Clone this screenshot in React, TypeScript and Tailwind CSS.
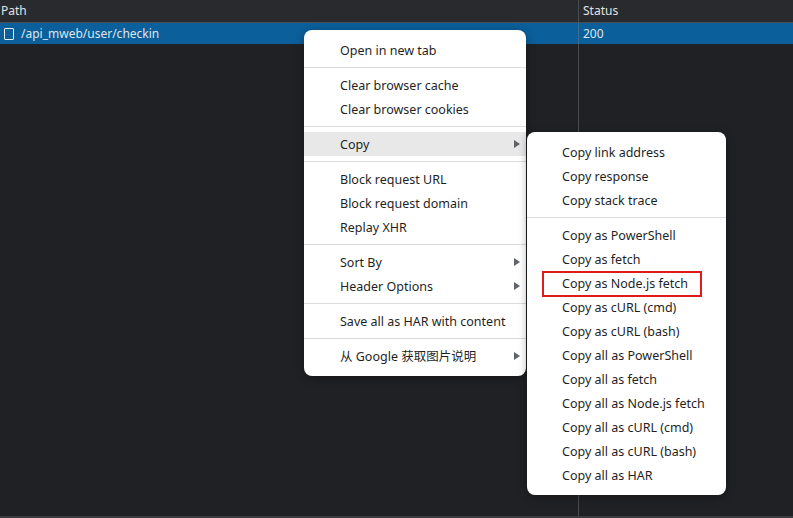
import { ReactNode } from 'react';

type Entry = { label?: string; sep?: boolean; arrow?: boolean; active?: boolean; boxed?: boolean };

const mainMenu: Entry[] = [
  { label: 'Open in new tab' },
  { sep: true },
  { label: 'Clear browser cache' },
  { label: 'Clear browser cookies' },
  { sep: true },
  { label: 'Copy', arrow: true, active: true },
  { sep: true },
  { label: 'Block request URL' },
  { label: 'Block request domain' },
  { label: 'Replay XHR' },
  { sep: true },
  { label: 'Sort By', arrow: true },
  { label: 'Header Options', arrow: true },
  { sep: true },
  { label: 'Save all as HAR with content' },
  { sep: true },
  { label: '从 Google 获取图片说明', arrow: true },
];

const copyMenu: Entry[] = [
  { label: 'Copy link address' },
  { label: 'Copy response' },
  { label: 'Copy stack trace' },
  { sep: true },
  { label: 'Copy as PowerShell' },
  { label: 'Copy as fetch' },
  { label: 'Copy as Node.js fetch', boxed: true },
  { label: 'Copy as cURL (cmd)' },
  { label: 'Copy as cURL (bash)' },
  { label: 'Copy all as PowerShell' },
  { label: 'Copy all as fetch' },
  { label: 'Copy all as Node.js fetch' },
  { label: 'Copy all as cURL (cmd)' },
  { label: 'Copy all as cURL (bash)' },
  { label: 'Copy all as HAR' },
];

function Arrow() {
  return (
    <svg width="6" height="8" viewBox="0 0 6 8" className="absolute right-[6px] top-[8px]">
      <path d="M0 0 L6 4 L0 8 Z" fill="#5f6368" />
    </svg>
  );
}

function Menu({ items, className, indent }: { items: Entry[]; className: string; indent: string }) {
  return (
    <div className={`absolute bg-white rounded-[8px] py-[8px] shadow-[0_2px_8px_rgba(0,0,0,0.35)] ${className}`}>
      {items.map((it, i) =>
        it.sep ? (
          <div key={i} className="h-[11px] flex items-center">
            <div className="h-px w-full bg-[#dadce0]" />
          </div>
        ) : (
          <div
            key={i}
            className={`relative h-[24px] flex items-center ${indent} text-[12.5px] text-[#1f1f1f] ${it.active ? 'bg-[#e8e8e8]' : ''}`}
          >
            {it.boxed && (
              <div className="absolute left-[15px] right-[24px] top-0 bottom-[-2px] border-2 border-[#e01b1b]" />
            )}
            <span className="relative pt-[2px]">{it.label}</span>
            {it.arrow && <Arrow />}
          </div>
        )
      )}
    </div>
  );
}

function Cell({ children, className }: { children?: ReactNode; className: string }) {
  return <div className={`flex items-center ${className}`}>{children}</div>;
}

export default function App() {
  return (
    <div
      className="relative w-[793px] h-[518px] overflow-hidden bg-[#202124] text-[12px]"
      style={{ fontFamily: '"Noto Sans", "Noto Sans CJK SC", sans-serif' }}
    >
      <div className="flex flex-col h-full">
        <div className="flex h-[23px] bg-[#292a2d] border-b border-[#4a4c50] text-[#e3e3e3]">
          <Cell className="w-[579px] pl-[1px] border-r border-[#4a4c50]">Path</Cell>
          <Cell className="flex-1 pl-[4px]">Status</Cell>
        </div>
        <div className="flex h-[21px] bg-[#0b5f9a] text-[#dfe6ee]">
          <Cell className="w-[579px] pl-[4px] gap-[7px] border-r border-[#3d6f93]">
            <span className="w-[10px] h-[12px] border border-[#e6edf3] rounded-[1px]" />
            <span className="pt-[1px]">/api_mweb/user/checkin</span>
          </Cell>
          <Cell className="flex-1 pl-[4px] pt-[1px]">200</Cell>
        </div>
        <div className="flex flex-1 border-b-2 border-[#3c3d41]">
          <div className="w-[579px] border-r border-[#4a4c50]" />
          <div className="flex-1" />
        </div>
      </div>

      <Menu items={mainMenu} indent="pl-[36px]" className="left-[304px] top-[30px] w-[222px]" />
      <Menu items={copyMenu} indent="pl-[35px]" className="left-[527px] top-[132px] w-[199px]" />
    </div>
  );
}
